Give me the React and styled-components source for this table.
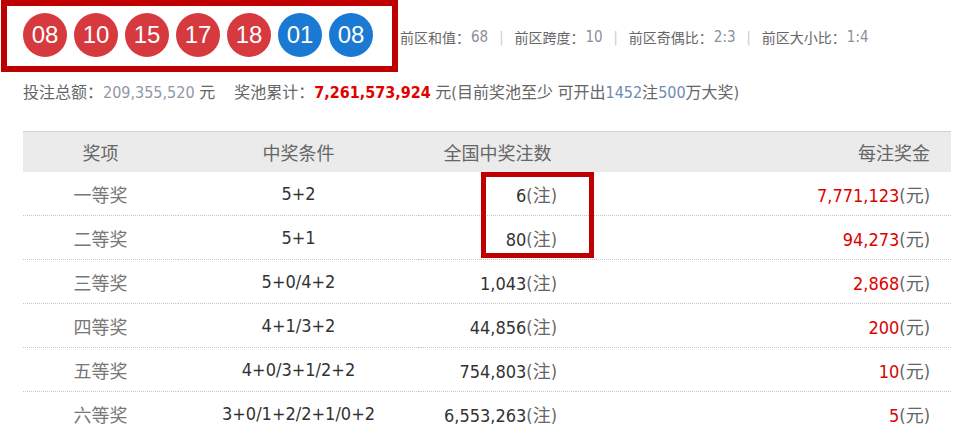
import React from "react";
import styled, { createGlobalStyle } from "styled-components";

const Global = createGlobalStyle`
  html, body { margin: 0; padding: 0; background: #fff; }
  body { font-family: "DejaVu Sans Condensed", "DejaVu Sans", "Noto Sans CJK SC", sans-serif; }
`;

const CJK = `"DejaVu Sans Condensed", "DejaVu Sans", "Noto Sans CJK SC", sans-serif`;

const Page = styled.div`
  width: 961px;
  height: 431px;
  overflow: hidden;
  font-family: ${CJK};
`;

const TopRow = styled.div`
  display: flex;
  align-items: center;
  height: 72px;
`;

const BallBox = styled.div`
  box-sizing: border-box;
  margin-left: 1px;
  width: 397px;
  height: 72px;
  border: 6px solid #c00000;
  display: flex;
  align-items: center;
  gap: 7px;
  padding: 0 0 2px 16px;
`;

const Ball = styled.div`
  width: 44px;
  height: 44px;
  border-radius: 50%;
  background: ${(p) => (p.$blue ? "#1a79d3" : "#d6393e")};
  color: #fff;
  font-family: "Liberation Sans", Arial, sans-serif;
  font-size: 24px;
  display: flex;
  align-items: center;
  justify-content: center;
`;

const Stats = styled.div`
  margin-left: 2px;
  padding-top: 2px;
  font-size: 14px;
  color: #666;
  display: flex;
  align-items: center;
  white-space: nowrap;
`;

const StatVal = styled.span`
  color: #8a8f99;
  font-size: 15px;
  margin-left: 1px;
`;

const Sep = styled.span`
  color: #c8ccd4;
  margin: 0 11px;
`;

const InfoLine = styled.div`
  margin-top: 9px;
  padding-left: 23px;
  height: 24px;
  line-height: 24px;
  font-size: 16px;
  color: #666;
  white-space: nowrap;
`;

const Soft = styled.span`
  color: ${(p) => p.$c || "#8f98a6"};
`;

const Strong = styled.span`
  color: #e00000;
  font-weight: bold;
`;

const Gap = styled.span`
  display: inline-block;
  width: ${(p) => p.$w}px;
`;

const TableWrap = styled.div`
  position: relative;
  margin: 26px 0 0 23px;
  width: 928px;
`;

const Table = styled.table`
  width: 928px;
  border-collapse: collapse;
  table-layout: fixed;
  font-size: 18px;
`;

const HeadRow = styled.tr`
  background: #ebebeb;
  border-top: 1px solid #d2d2d2;
`;

const Th = styled.th`
  height: 40px;
  padding: 0 ${(p) => p.$pr || 0}px 0 0;
  font-weight: normal;
  color: #666;
  text-align: ${(p) => p.$align || "center"};
`;

const Row = styled.tr`
  border-bottom: 1px dotted #c4c4c4;
`;

const Td = styled.td`
  height: 43px;
  padding: 0 ${(p) => p.$pr || 0}px 0 0;
  text-align: ${(p) => p.$align || "center"};
  color: ${(p) => p.$color || "#333"};
  white-space: nowrap;
`;

const Unit = styled.span`
  color: #666;
`;

const Money = styled.span`
  color: #dd0000;
`;

const Highlight = styled.div`
  position: absolute;
  box-sizing: border-box;
  left: 458px;
  top: 41px;
  width: 113px;
  height: 86px;
  border: 5px solid #c00000;
  pointer-events: none;
`;

const balls = [
  ["08"], ["10"], ["15"], ["17"], ["18"], ["01", true], ["08", true],
];

const stats = [
  ["前区和值：", "68"],
  ["前区跨度：", "10"],
  ["前区奇偶比：", "2:3"],
  ["前区大小比：", "1:4"],
];

const rows = [
  ["一等奖", "5+2", "6", "7,771,123"],
  ["二等奖", "5+1", "80", "94,273"],
  ["三等奖", "5+0/4+2", "1,043", "2,868"],
  ["四等奖", "4+1/3+2", "44,856", "200"],
  ["五等奖", "4+0/3+1/2+2", "754,803", "10"],
  ["六等奖", "3+0/1+2/2+1/0+2", "6,553,263", "5"],
];

export default function App() {
  return (
    <Page>
      <Global />
      <TopRow>
        <BallBox>
          {balls.map(([n, blue], i) => (
            <Ball key={i} $blue={blue}>{n}</Ball>
          ))}
        </BallBox>
        <Stats>
          {stats.map(([k, v], i) => (
            <React.Fragment key={k}>
              {i > 0 && <Sep>|</Sep>}
              <span>{k}</span>
              <StatVal>{v}</StatVal>
            </React.Fragment>
          ))}
        </Stats>
      </TopRow>
      <InfoLine>
        投注总额：<Soft>209,355,520</Soft> 元<Gap $w={19} />奖池累计：
        <Strong>7,261,573,924</Strong> 元(目前奖池至少 可开出<Soft $c="#6f8bb0">1452</Soft>注<Soft $c="#6f8bb0">500</Soft>万大奖)
      </InfoLine>
      <TableWrap>
        <Table>
          <colgroup>
            <col style={{ width: 155 }} />
            <col style={{ width: 241 }} />
            <col style={{ width: 157 }} />
            <col style={{ width: 375 }} />
          </colgroup>
          <thead>
            <HeadRow>
              <Th>奖项</Th>
              <Th>中奖条件</Th>
              <Th>全国中奖注数</Th>
              <Th $align="right" $pr={21}>每注奖金</Th>
            </HeadRow>
          </thead>
          <tbody>
            {rows.map(([name, cond, count, money]) => (
              <Row key={name}>
                <Td $color="#777">{name}</Td>
                <Td>{cond}</Td>
                <Td $align="right" $pr={19}>
                  {count}<Unit>(注)</Unit>
                </Td>
                <Td $align="right" $pr={21}>
                  <Money>{money}</Money><Unit>(元)</Unit>
                </Td>
              </Row>
            ))}
          </tbody>
        </Table>
        <Highlight />
      </TableWrap>
    </Page>
  );
}
